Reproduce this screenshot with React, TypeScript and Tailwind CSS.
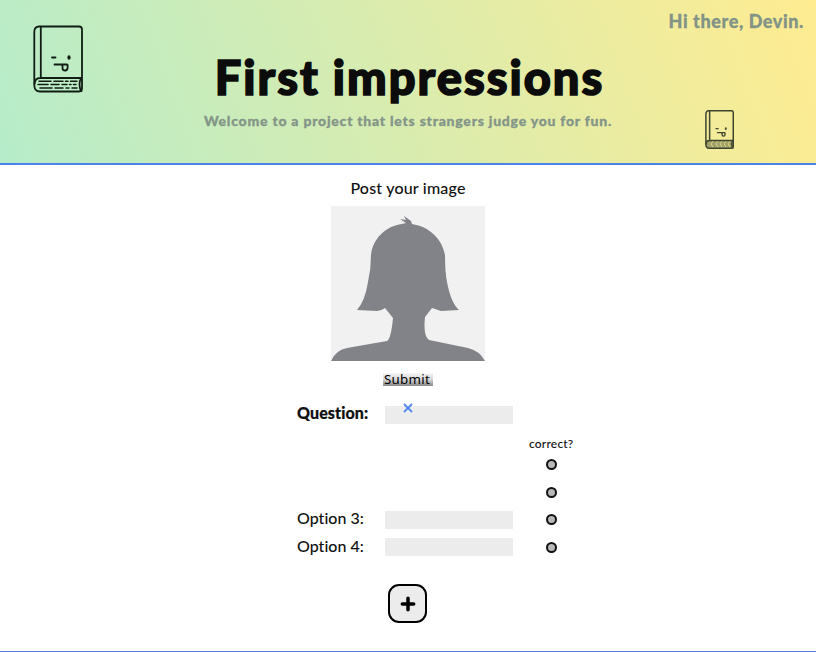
function Book({ className, small = false }: { className: string; small?: boolean }) {
  return (
    <svg viewBox="0 0 50 68" className={className} fill="none" stroke="#101c14" strokeWidth={small ? 2.6 : 1.8} strokeLinecap="round" strokeLinejoin="round">
      {small && <path d="M3 53H48V66H5Q1.3 64 1.3 60Z" fill="#101c14" fillOpacity=".45" stroke="none" />}
      <path d="M6 1.5H46Q49 1.5 49 4.5V63Q49 66.5 46 66.5H7Q1.3 66.5 1.3 60V7Q1.3 1.5 6 1.5Z" />
      <path d="M7.8 2V53M48.5 53H7Q2 53 1.5 59M48.5 53.2Q46.5 55 46.5 59.5T48.5 66" />
      <path d="M19 32.5h3.5M21.5 39.5H34M29.5 39.8V43Q29.5 45.5 32 45.5Q34.6 45.5 34.6 42.5V39.8" strokeWidth={small ? 2.4 : 1.8} />
      <ellipse cx="36" cy="32.5" rx="1.6" ry="2.3" fill="#101c14" stroke="none" />
      {small ? (
        <path d="M13 55l-3 4 3 5M22 55l-3 4 3 5M29 55l-3 4 3 5M36 55l-3 4 3 5M43 55l-3 4 3 5" stroke="#e8e28f" strokeWidth="1.4" />
      ) : (
        <path d="M6 56.3H18M21 56.3H30M32.5 56.3H35M37.5 56.3H44M5 59.6H15M18 59.6H26M29 59.6H34M36.5 59.6H38M40.5 59.6H43M7 63H19M22 63H30M33 63H36M39 63H44" strokeWidth="1.5" />
      )}
    </svg>
  );
}

function Portrait() {
  return (
    <svg viewBox="0 0 154 155" className="h-[155px] w-[154px] bg-[#f1f1f1]">
      <path fill="#828388" d="M0 155Q5 144 16 142L56 135Q60 133 62 112L54 102Q50 105 46 105L26 104Q34 95 37 76Q40 63 40 49C42 32 55 20 71 18L75 17L69 13L75 14L73 10L80 15L81 18C99 21 111 33 114 49Q114 66 116 76Q120 97 128 104L110 105L101 102L94 111Q92 130 98 134L137 142Q149 145 154 155Z" />
    </svg>
  );
}

function Correct() {
  return <span className="block h-[11px] w-[11px] rounded-full border-2 border-[#111] bg-[#b8b8b8]" />;
}

export default function App() {
  return (
    <div className="flex h-[652px] w-[816px] flex-col overflow-hidden border-b border-[#4e80df] bg-white font-['Lato',sans-serif] text-[#101010] [font-variant-ligatures:none]">
      <header className="relative flex h-[165px] shrink-0 flex-col items-center border-b-2 border-[#4b83e8] bg-[linear-gradient(70deg,#b6ecca_0%,#ffec91_100%)]">
        <Book className="absolute top-[25px] left-[33px] h-[68px] w-[50px]" />
        <Book small className="absolute top-[110px] left-[705px] h-[39px] w-[29px] opacity-80" />
        <p className="absolute top-[9px] right-[12px] text-[18px] leading-6 font-black tracking-[0.6px] whitespace-nowrap text-[#829388] [-webkit-text-stroke:0.3px]">Hi there, Devin.</p>
        <h1 className="mt-[48px] ml-[3px] h-[58px] text-[47px] leading-[58px] font-black tracking-[2px] whitespace-nowrap text-[#0c0c0c] [-webkit-text-stroke:1.6px]">First impressions</h1>
        <p className="mt-[5px] text-[14px] leading-5 font-black tracking-[0.77px] whitespace-nowrap text-[#849589] [-webkit-text-stroke:0.3px]">Welcome to a project that lets strangers judge you for fun.</p>
      </header>
      <main className="flex flex-col items-center">
        <h2 className="mt-[12px] h-[29px] text-[16px] leading-[22px] font-medium tracking-[0.2px]">Post your image</h2>
        <Portrait />
        <button className="mt-[12px] flex h-[13px] w-[50px] items-center bg-linear-to-b from-[#f7f7f7] via-[#d5d5d5] to-[#888] pl-px font-['Noto_Sans'] text-[13.3px] leading-none tracking-[0.3px] text-black">Submit</button>
        <section className="ml-[54px] grid w-[276px] grid-cols-[88px_128px_60px] pt-[16px]">
          <label className="h-[31px] text-[16px] leading-[22px] font-black tracking-[0.1px] [-webkit-text-stroke:0.2px]">Question:</label>
          <div className="relative mt-[4px] h-[18px] w-[127.5px] bg-[#ececec]">
            <svg viewBox="0 0 10 10" className="absolute top-[-3px] left-[17.5px] h-[10px] w-[10px]" stroke="#5387f2" strokeWidth="1.8"><path d="M1 1L9 9M9 1L1 9" /></svg>
          </div>
          <span />
          <span className="col-start-3 ml-[16px] h-[26px] text-[12px] leading-[22px] font-medium tracking-[0.2px]">correct?</span>
          <div className="col-span-3 ml-[248.5px] h-[27.5px]"><Correct /></div>
          <div className="col-span-3 ml-[248.5px] h-[19.5px]"><Correct /></div>
          {[3, 4].map((n) => (
            <div key={n} className="col-span-3 grid h-[27.5px] grid-cols-[88px_128px_60px] items-center">
              <label className="pb-[3px] text-[16px] leading-[22px] font-medium">Option {n}:</label>
              <span className="h-[18px] w-[127.5px] bg-[#ececec]" />
              <span className="ml-[32.5px]"><Correct /></span>
            </div>
          ))}
        </section>
        <button className="mt-[22.5px] mr-px flex h-[39px] w-[39px] items-center justify-center rounded-[11px] border-2 border-black bg-[#ececec]">
          <svg viewBox="0 0 16 16" className="mt-[2px] h-4 w-4" stroke="#000" strokeWidth="3.5" strokeLinecap="round"><path d="M8 2.3V13.7M2.3 8H13.7" /></svg>
        </button>
      </main>
    </div>
  );
}
